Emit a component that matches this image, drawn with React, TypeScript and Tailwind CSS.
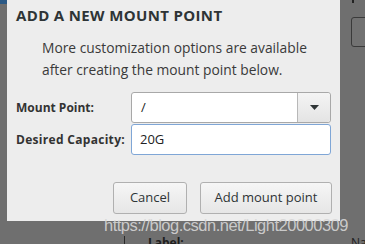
export default function App() {
  return (
    <div className="relative w-[365px] h-[244px] overflow-hidden bg-[#6f6f6f] font-['Open_Sans',sans-serif]">
      {/* app behind the dialog */}
      <div className="absolute left-0 top-0 w-[7px] h-[4px] bg-[#2c5a86]" />
      <div className="absolute left-[352px] top-0 w-[2px] h-[3px] bg-[#222]" />
      <div className="absolute left-[351px] top-[17px] w-[20px] h-[30px] rounded-[3px] border border-[#3a3a3a] bg-[#727272]" />
      <div className="absolute left-[124px] top-[236px] w-px h-[10px] bg-[#2a2a2a]" />
      <div className="absolute left-[148px] top-[237px] text-[12px] font-bold leading-none text-[#1e1e1e]">Label:</div>
      <div className="absolute left-[351px] top-[237px] text-[12px] leading-none text-[#1e1e1e]">Na</div>

      {/* dialog */}
      <div className="relative ml-[7px] w-[333px] h-[221px] bg-[#ededed] text-[#2e3436]">
        <div className="pl-[9px] pt-[4px] text-[15px] font-bold leading-[22px] tracking-[0.35px]">ADD A NEW MOUNT POINT</div>
        <div className="pl-[35px] pt-[11px] text-[13.8px] leading-[22px] text-[#3a3a3a]">
          More customization options are available
          <br />
          after creating the mount point below.
        </div>

        <div className="mt-[11px] flex flex-col gap-[1px] pl-[9px] pr-[9px]">
          <div className="flex items-center">
            <div className="w-[115px] text-[12px] font-bold text-[#333]">Mount Point:</div>
            <div className="flex h-[31px] w-[200px] rounded-[3px] border border-[#a8a8a8] bg-white">
              <div className="flex flex-1 items-center pl-[9px] text-[13px] text-[#222]">/</div>
              <div className="flex w-[33px] items-center justify-center border-l border-[#b8b8b8] bg-gradient-to-b from-[#f4f4f4] to-[#e4e4e4] rounded-r-[3px]">
                <svg width="9" height="5" viewBox="0 0 9 5">
                  <path d="M0 0h9L4.5 5z" fill="#2e3436" />
                </svg>
              </div>
            </div>
          </div>
          <div className="flex items-center">
            <div className="w-[115px] text-[12px] font-bold text-[#333] tracking-[0.3px]">Desired Capacity:</div>
            <div className="flex h-[31px] w-[200px] items-center rounded-[3px] border border-[#7fa6d6] bg-white pl-[8px] text-[13px] text-[#222]">
              20G
            </div>
          </div>
        </div>

        <div className="mt-[27px] flex justify-end gap-[13px] pr-[8px]">
          <button className="h-[32px] w-[74px] rounded-[3px] border border-[#b0b0b0] bg-gradient-to-b from-[#f6f6f6] to-[#e6e6e6] text-[13px] text-[#2e3436]">
            Cancel
          </button>
          <button className="h-[32px] w-[132px] rounded-[3px] border border-[#b0b0b0] bg-gradient-to-b from-[#f6f6f6] to-[#e6e6e6] text-[13px] text-[#2e3436]">
            Add mount point
          </button>
        </div>
      </div>

      {/* watermark */}
      <div className="absolute left-[104px] top-[214px] font-['Liberation_Sans',Arial,sans-serif] text-[16.5px] leading-[22px] tracking-[-0.5px] text-[#d6d6d6]/90">
        https://blog.csdn.net/Light20000309
      </div>
    </div>
  )
}
